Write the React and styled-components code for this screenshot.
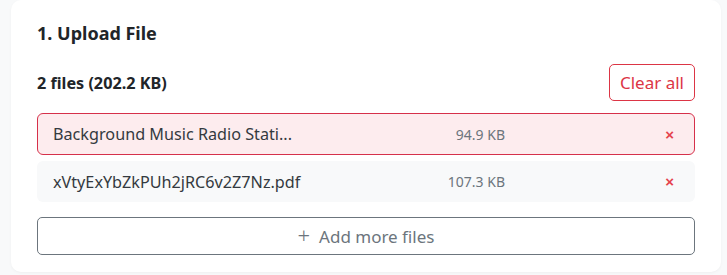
import React from "react";
import styled, { createGlobalStyle } from "styled-components";

const GlobalStyle = createGlobalStyle`
  html, body {
    margin: 0;
    padding: 0;
    background: #f8f9fa;
    font-family: "Noto Sans", "Open Sans", sans-serif;
  }
`;

const Page = styled.div`
  padding: 0 6px 0 11px;
  height: 275px;
  overflow: hidden;
`;

const Card = styled.section`
  background: #fff;
  border-radius: 10px;
  padding: 19px 26px 17px 26px;
  box-shadow: 0 1px 3px rgba(0, 0, 0, 0.04);
`;

const Title = styled.h2`
  margin: 0 0 17px;
  font-size: 18px;
  font-weight: 700;
  color: #212529;
  line-height: 28px;
`;

const Header = styled.div`
  display: flex;
  align-items: center;
  justify-content: space-between;
  margin-bottom: 12px;
`;

const Count = styled.div`
  font-size: 16.2px;
  font-weight: 700;
  color: #212529;
`;

const ClearButton = styled.button`
  font-family: inherit;
  height: 37px;
  padding: 0 10px;
  background: #fff;
  color: #dc3545;
  border: 1px solid #dc3545;
  border-radius: 5px;
  font-size: 17px;
  cursor: pointer;
`;

const List = styled.div`
  display: flex;
  flex-direction: column;
  gap: 6px;
`;

const Row = styled.div`
  display: grid;
  grid-template-columns: 1fr 120px 175px;
  align-items: center;
  height: ${(p) => (p.$active ? "42px" : "41px")};
  padding: 0 14px 0 15px;
  border-radius: 6px;
  box-sizing: border-box;
  background: ${(p) => (p.$active ? "#fdecee" : "#f8f9fa")};
  border: 1px solid ${(p) => (p.$active ? "#d6304a" : "transparent")};
`;

const Name = styled.span`
  font-size: 16.2px;
  color: #343a40;
  white-space: nowrap;
  overflow: hidden;
  text-overflow: ellipsis;
`;

const Size = styled.span`
  font-size: 14px;
  color: #6c757d;
  text-align: right;
`;

const Remove = styled.button`
  justify-self: end;
  background: none;
  border: none;
  padding: 0;
  color: #e5434d;
  font-size: 15px;
  font-weight: 700;
  line-height: 1;
  cursor: pointer;
  margin-right: 6px;
`;

const AddButton = styled.button`
  font-family: inherit;
  margin-top: 15px;
  width: 100%;
  height: 38px;
  background: #fff;
  color: #6c757d;
  border: 1px solid #6c757d;
  border-radius: 5px;
  font-size: 17px;
  display: flex;
  align-items: center;
  justify-content: center;
  gap: 9px;
  cursor: pointer;
`;

const Plus = styled.span`
  font-size: 22px;
  font-weight: 300;
  line-height: 1;
  margin-top: -2px;
`;

const files = [
  { name: "Background Music Radio Stati...", size: "94.9 KB", active: true },
  { name: "xVtyExYbZkPUh2jRC6v2Z7Nz.pdf", size: "107.3 KB" },
];

export default function App() {
  return (
    <Page>
      <GlobalStyle />
      <Card>
        <Title>1. Upload File</Title>
        <Header>
          <Count>2 files (202.2 KB)</Count>
          <ClearButton>Clear all</ClearButton>
        </Header>
        <List>
          {files.map((f) => (
            <Row key={f.name} $active={f.active}>
              <Name>{f.name}</Name>
              <Size>{f.size}</Size>
              <Remove aria-label="Remove">×</Remove>
            </Row>
          ))}
        </List>
        <AddButton>
          <Plus>+</Plus>
          Add more files
        </AddButton>
      </Card>
    </Page>
  );
}
